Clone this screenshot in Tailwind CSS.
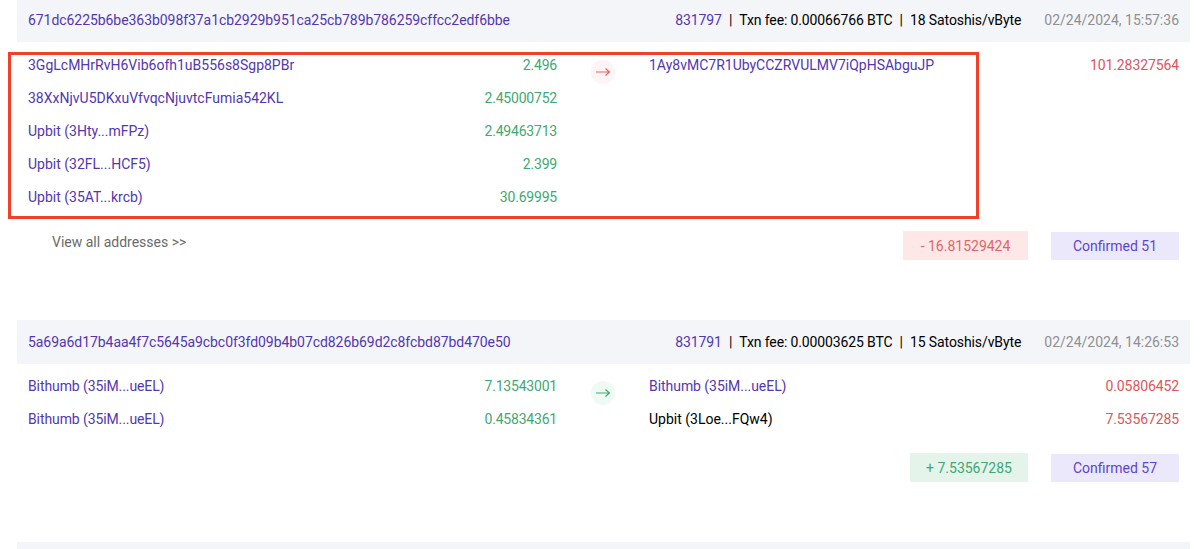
<!DOCTYPE html>
<html>
<head>
<meta charset="utf-8">
<script src="https://cdn.jsdelivr.net/npm/@tailwindcss/browser@4"></script>
</head>
<body class="bg-white h-[549px] overflow-hidden font-['Roboto',sans-serif] text-[14px] text-black relative">
<div class="pl-[17px] pr-[10px] -mt-[2px]">

  <!-- first tx -->
  <div class="h-[322px]">
    <div class="h-[44px] bg-[#f4f5f9] flex items-center pl-[11px] pr-[11px]">
      <a class="text-[#5237b0] tracking-[-0.06px]">671dc6225b6be363b098f37a1cb2929b951ca25cb789b786259cffcc2edf6bbe</a>
      <div class="ml-auto flex items-center">
        <a class="text-[#5237b0] tracking-[-0.1px]">831797</a>
        <span class="mx-[7px]">|</span>
        <span class="tracking-[-0.13px]">Txn fee: 0.00066766 BTC</span>
        <span class="mx-[7px]">|</span>
        <span class="tracking-[-0.1px]">18 Satoshis/vByte</span>
        <span class="ml-[23px] text-[#8f9094]">02/24/2024, 15:57:36</span>
      </div>
    </div>
    <div class="flex pt-[7px] pl-[11px] pr-[11px]">
      <div class="w-[529px]">
        <div class="h-[33px] flex items-center justify-between"><a class="text-[#5237b0]">3GgLcMHrRvH6Vib6ofh1uB556s8Sgp8PBr</a><span class="text-[#3fa873] tracking-[-0.2px]">2.496</span></div>
        <div class="h-[33px] flex items-center justify-between"><a class="text-[#5237b0]">38XxNjvU5DKxuVfvqcNjuvtcFumia542KL</a><span class="text-[#3fa873] tracking-[-0.2px]">2.45000752</span></div>
        <div class="h-[33px] flex items-center justify-between"><a class="text-[#5237b0]">Upbit (3Hty...mFPz)</a><span class="text-[#3fa873] tracking-[-0.2px]">2.49463713</span></div>
        <div class="h-[33px] flex items-center justify-between"><a class="text-[#5237b0]">Upbit (32FL...HCF5)</a><span class="text-[#3fa873] tracking-[-0.2px]">2.399</span></div>
        <div class="h-[33px] flex items-center justify-between"><a class="text-[#5237b0]">Upbit (35AT...krcb)</a><span class="text-[#3fa873] tracking-[-0.2px]">30.69995</span></div>
      </div>
      <div class="w-[92px] flex justify-center pt-[11px]">
        <div class="w-[24px] h-[24px] rounded-full bg-[#fef4f4] flex items-center justify-center">
          <svg width="14" height="12" viewBox="0 0 14 12" fill="none" stroke="#e8605c" stroke-width="1.2"><path d="M0 6H13.5M9.5 2.5L13.5 6L9.5 9.5"/></svg>
        </div>
      </div>
      <div class="flex-1">
        <div class="h-[33px] flex items-center justify-between"><a class="text-[#5237b0]">1Ay8vMC7R1UbyCCZRVULMV7iQpHSAbguJP</a><span class="text-[#e0555a] tracking-[-0.1px]">101.28327564</span></div>
      </div>
    </div>
    <div class="flex items-center justify-between mt-[17px] pl-[35px] pr-[11px]">
      <a class="text-[#6b6b6b] -mt-[6px]">View all addresses &gt;&gt;</a>
      <div class="flex items-center gap-[23px]">
        <span class="h-[29px] w-[125px] pt-[1px] bg-[#fde8e7] text-[#e0656a] flex items-center justify-center">- 16.81529424</span>
        <span class="h-[28px] w-[128px] pt-[1px] bg-[#ece8fb] text-[#5b45d0] flex items-center justify-center">Confirmed 51</span>
      </div>
    </div>
  </div>

  <!-- second tx -->
  <div class="h-[222px]">
    <div class="h-[44px] bg-[#f4f5f9] flex items-center pl-[11px] pr-[11px]">
      <a class="text-[#5237b0] tracking-[-0.06px]">5a69a6d17b4aa4f7c5645a9cbc0f3fd09b4b07cd826b69d2c8fcbd87bd470e50</a>
      <div class="ml-auto flex items-center">
        <a class="text-[#5237b0] tracking-[-0.1px]">831791</a>
        <span class="mx-[7px]">|</span>
        <span class="tracking-[-0.13px]">Txn fee: 0.00003625 BTC</span>
        <span class="mx-[7px]">|</span>
        <span class="tracking-[-0.1px]">15 Satoshis/vByte</span>
        <span class="ml-[23px] text-[#8f9094]">02/24/2024, 14:26:53</span>
      </div>
    </div>
    <div class="flex pt-[6px] pl-[11px] pr-[11px]">
      <div class="w-[529px]">
        <div class="h-[33px] flex items-center justify-between"><a class="text-[#5237b0] tracking-[-0.1px]">Bithumb (35iM...ueEL)</a><span class="text-[#3fa873] tracking-[-0.2px]">7.13543001</span></div>
        <div class="h-[33px] flex items-center justify-between"><a class="text-[#5237b0] tracking-[-0.1px]">Bithumb (35iM...ueEL)</a><span class="text-[#3fa873] tracking-[-0.2px]">0.45834361</span></div>
      </div>
      <div class="w-[92px] flex justify-center pt-[11px]">
        <div class="w-[24px] h-[24px] rounded-full bg-[#eefaf3] flex items-center justify-center">
          <svg width="14" height="12" viewBox="0 0 14 12" fill="none" stroke="#3fa873" stroke-width="1.2"><path d="M0 6H13.5M9.5 2.5L13.5 6L9.5 9.5"/></svg>
        </div>
      </div>
      <div class="flex-1">
        <div class="h-[33px] flex items-center justify-between"><a class="text-[#5237b0] tracking-[-0.05px]">Bithumb (35iM...ueEL)</a><span class="text-[#e0555a] tracking-[-0.1px]">0.05806452</span></div>
        <div class="h-[33px] flex items-center justify-between"><span>Upbit (3Loe...FQw4)</span><span class="text-[#e0555a] tracking-[-0.1px]">7.53567285</span></div>
      </div>
    </div>
    <div class="flex items-center justify-end mt-[17px] pr-[11px]">
      <div class="flex items-center gap-[23px]">
        <span class="h-[29px] w-[118px] pt-[1px] bg-[#e4f4ea] text-[#3fa873] flex items-center justify-center">+ 7.53567285</span>
        <span class="h-[28px] w-[128px] pt-[1px] bg-[#ece8fb] text-[#5b45d0] flex items-center justify-center">Confirmed 57</span>
      </div>
    </div>
  </div>

  <!-- next tx, cut off by the window -->
  <div class="h-[44px] bg-[#f4f5f9]"></div>
</div>

<!-- red highlight drawn over the page -->
<div class="absolute left-[8px] top-[52px] w-[971px] h-[167px] border-[3px] border-[#f0402a]"></div>
</body>
</html>
